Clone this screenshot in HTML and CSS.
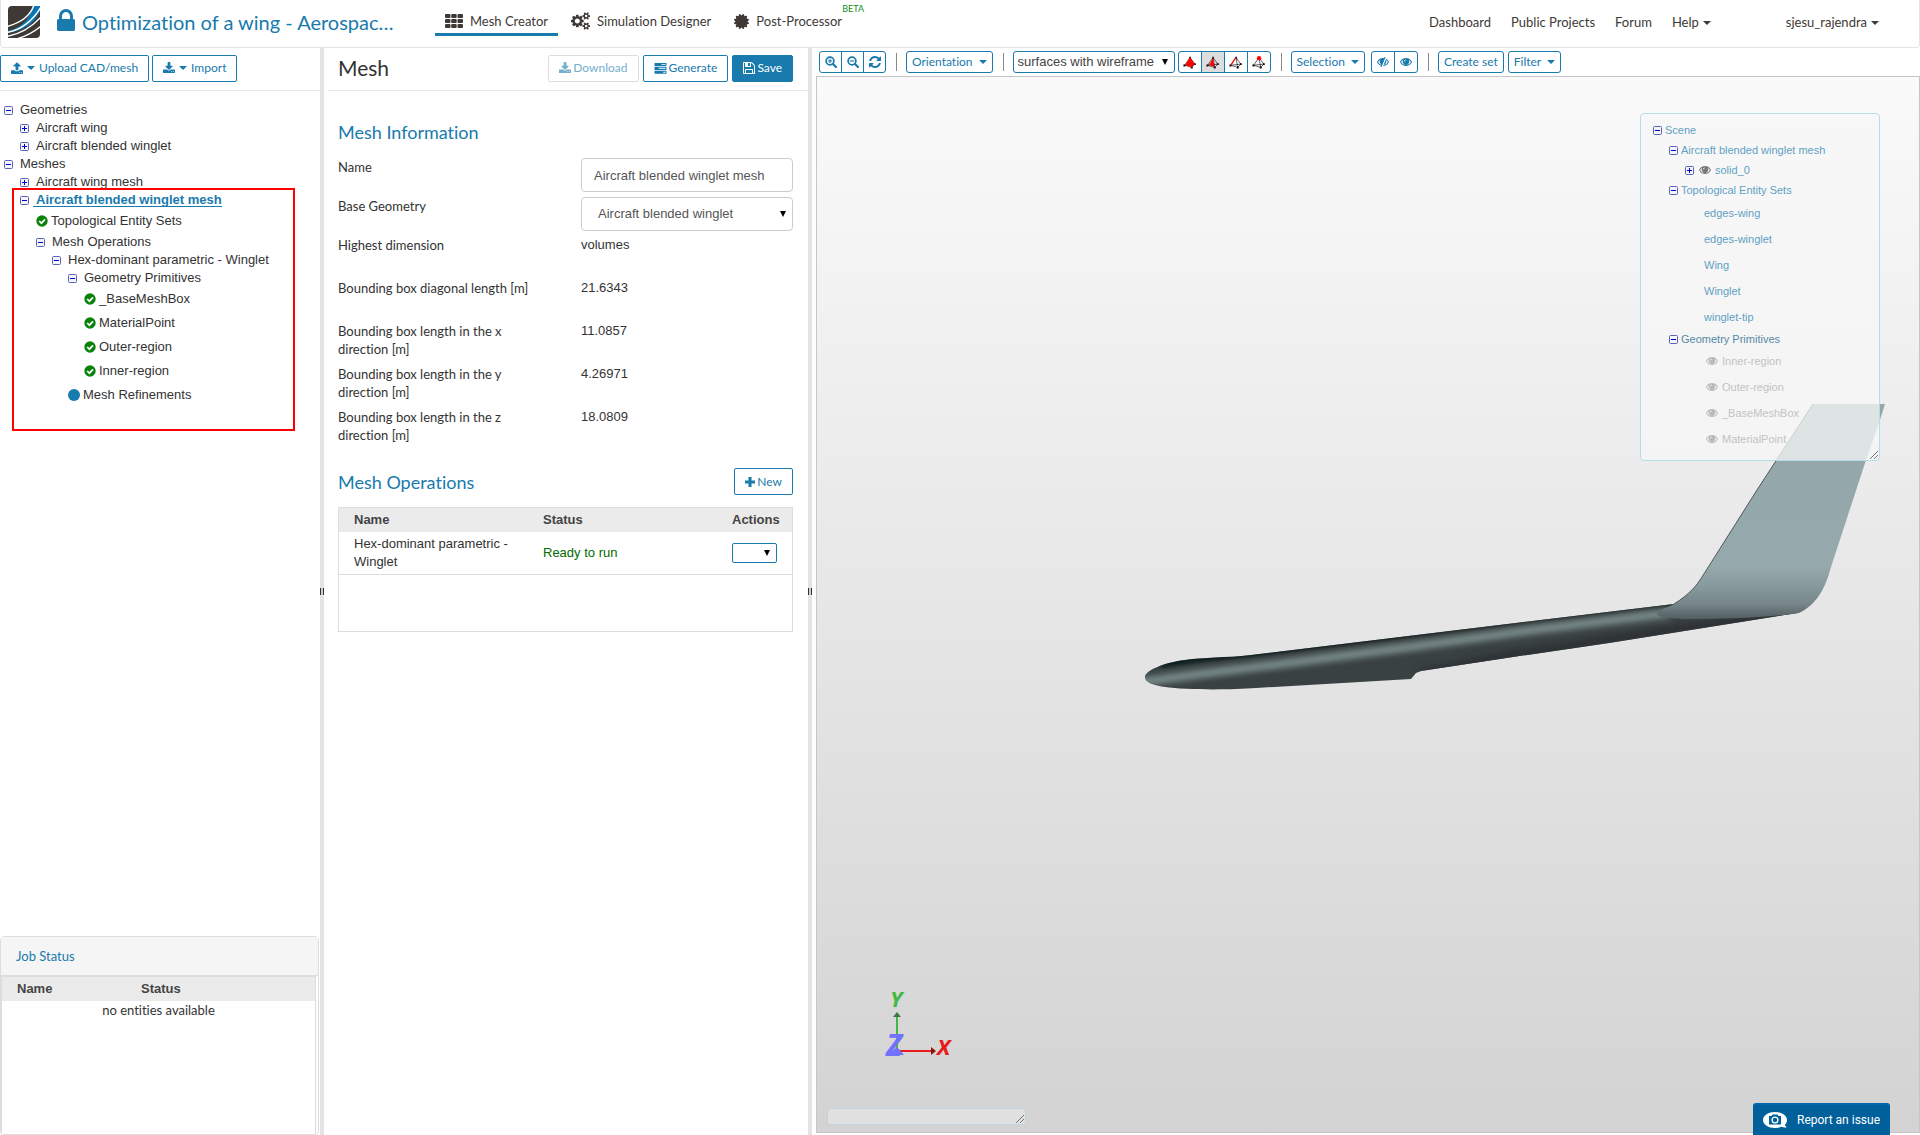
FILE: index.html
```html
<!DOCTYPE html>
<html lang="en">
<head>
<meta charset="utf-8">
<title>Mesh Creator</title>
<link rel="stylesheet" href="styles.css">
</head>
<body>
<svg class="sprite" aria-hidden="true">
  <symbol id="lock" viewBox="320 128 1152 1408"><path d="M640 768h512v-192q0-106-75-181t-181-75-181 75-75 181v192zm832 96v576q0 40-28 68t-68 28h-960q-40 0-68-28t-28-68v-576q0-40 28-68t68-28h32v-192q0-184 132-316t316-132 316 132 132 316v192h32q40 0 68 28t28 68z"/></symbol>
  <symbol id="download" viewBox="64 0 1664 1664"><path d="M1344 1344q0-26-19-45t-45-19-45 19-19 45 19 45 45 19 45-19 19-45zm256 0q0-26-19-45t-45-19-45 19-19 45 19 45 45 19 45-19 19-45zm128-224v320q0 40-28 68t-68 28h-1472q-40 0-68-28t-28-68v-320q0-40 28-68t68-28h465l135 136q58 56 136 56t136-56l136-136h464q40 0 68 28t28 68zm-325-569q17 41-14 70l-448 448q-18 19-45 19t-45-19l-448-448q-31-29-14-70 17-39 59-39h256v-448q0-26 19-45t45-19h256q26 0 45 19t19 45v448h256q42 0 59 39z"/></symbol>
  <symbol id="upload" viewBox="64 0 1664 1664"><path d="M1344 1472q0-26-19-45t-45-19-45 19-19 45 19 45 45 19 45-19 19-45zm256 0q0-26-19-45t-45-19-45 19-19 45 19 45 45 19 45-19 19-45zm128-224v320q0 40-28 68t-68 28h-1472q-40 0-68-28t-28-68v-320q0-40 28-68t68-28h427q21 56 70.5 92t110.5 36h256q61 0 110.5-36t70.5-92h427q40 0 68 28t28 68zm-325-648q-17 40-59 40h-256v448q0 26-19 45t-45 19h-256q-26 0-45-19t-19-45v-448h-256q-42 0-59-40-17-39 14-69l448-448q18-19 45-19t45 19l448 448q31 30 14 69z"/></symbol>
  <symbol id="cogs" viewBox="0 0 1920 1792"><path d="M896 896q0-106-75-181t-181-75-181 75-75 181 75 181 181 75 181-75 75-181zm768 512q0-52-38-90t-90-38-90 38-38 90q0 53 37.5 90.5t90.5 37.5 90.5-37.5 37.5-90.5zm0-1024q0-52-38-90t-90-38-90 38-38 90q0 53 37.5 90.5t90.5 37.5 90.5-37.5 37.5-90.5zm-384 421v185q0 10-7 19.5t-16 10.5l-155 24q-11 35-32 76 34 48 90 115 7 11 7 20 0 12-7 19-23 30-82.5 89.5t-78.5 59.5q-11 0-21-7l-115-90q-37 19-77 31-11 108-23 155-7 24-30 24h-186q-11 0-20-7.5t-10-17.5l-23-153q-34-10-75-31l-118 89q-7 7-20 7-11 0-21-8-144-133-144-160 0-9 7-19 10-14 41-53t47-61q-23-44-35-82l-152-24q-10-1-17-9.5t-7-19.5v-185q0-10 7-19.5t16-10.5l155-24q11-35 32-76-34-48-90-115-7-11-7-20 0-12 7-20 22-30 82-89t79-59q11 0 21 7l115 90q34-18 77-32 11-108 23-154 7-24 30-24h186q11 0 20 7.5t10 17.5l23 153q34 10 75 31l118-89q8-7 20-7 11 0 21 8 144 133 144 160 0 8-7 19-12 16-42 54t-45 60q23 48 34 82l152 23q10 2 17 10.5t7 19.5zm640 533v140q0 16-149 31-12 27-30 52 51 113 51 138 0 4-4 7-122 71-124 71-8 0-46-47t-52-68q-20 2-30 2t-30-2q-14 21-52 68t-46 47q-2 0-124-71-4-3-4-7 0-25 51-138-18-25-30-52-149-15-149-31v-140q0-16 149-31 13-29 30-52-51-113-51-138 0-4 4-7 4-2 35-20t59-34 30-16q8 0 46 46.5t52 67.5q20-2 30-2t30 2q51-71 92-112l6-2q4 0 124 70 4 3 4 7 0 25-51 138 17 23 30 52 149 15 149 31zm0-1024v140q0 16-149 31-12 27-30 52 51 113 51 138 0 4-4 7-122 71-124 71-8 0-46-47t-52-68q-20 2-30 2t-30-2q-14 21-52 68t-46 47q-2 0-124-71-4-3-4-7 0-25 51-138-18-25-30-52-149-15-149-31v-140q0-16 149-31 13-29 30-52-51-113-51-138 0-4 4-7 4-2 35-20t59-34 30-16q8 0 46 46.5t52 67.5q20-2 30-2t30 2q51-71 92-112l6-2q4 0 124 70 4 3 4 7 0 25-51 138 17 23 30 52 149 15 149 31z"/></symbol>
  <symbol id="burst" viewBox="128 128 1536 1536"><path d="M1504 896l138 135q30 28 20 70-12 41-52 51l-188 48 53 186q12 41-19 70-29 31-70 19l-186-53-48 188q-10 40-51 52-12 2-19 2-31 0-51-22l-135-138-135 138q-28 30-70 20-41-11-51-52l-48-188-186 53q-41 12-70-19-31-29-19-70l53-186-188-48q-40-10-52-51-10-42 20-70l138-135-138-135q-30-28-20-70 12-41 52-51l188-48-53-186q-12-41 19-70 29-31 70-19l186 53 48-188q10-41 51-51 41-12 70 19l135 139 135-139q29-30 70-19 41 10 51 51l48 188 186-53q41-12 70 19 31 29 19 70l-53 186 188 48q40 10 52 51 10 42-20 70z"/></symbol>
  <symbol id="floppy" viewBox="128 128 1536 1536"><path d="M512 1536h768v-384h-768v384zm896 0h128v-896q0-14-10-38.5t-20-34.5l-281-281q-10-10-34-20t-39-10v416q0 40-28 68t-68 28h-576q-40 0-68-28t-28-68v-416h-128v1280h128v-416q0-40 28-68t68-28h832q40 0 68 28t28 68v416zm-384-928v-320q0-13-9.5-22.5t-22.5-9.5h-192q-13 0-22.5 9.5t-9.5 22.5v320q0 13 9.5 22.5t22.5 9.5h192q13 0 22.5-9.5t9.5-22.5zm640 32v928q0 40-28 68t-68 28h-1344q-40 0-68-28t-28-68v-1344q0-40 28-68t68-28h928q40 0 88 20t76 48l280 280q28 28 48 76t20 88z"/></symbol>
  <symbol id="refresh" viewBox="128 128 1536 1536"><path d="M1639 1056q0 5-1 7-64 268-268 434.5t-478 166.5q-146 0-282.5-55t-243.5-157l-129 129q-19 19-45 19t-45-19-19-45v-448q0-26 19-45t45-19h448q26 0 45 19t19 45-19 45l-137 137q71 66 161 102t187 36q134 0 250-65t186-179q11-17 53-117 8-23 30-23h192q13 0 22.5 9.5t9.5 22.5zm25-800v448q0 26-19 45t-45 19h-448q-26 0-45-19t-19-45 19-45l138-138q-148-137-349-137-134 0-250 65t-186 179q-11 17-53 117-8 23-30 23h-199q-13 0-22.5-9.5t-9.5-22.5v-7q65-268 270-434.5t480-166.5q146 0 284 55.5t245 156.5l130-129q19-19 45-19t45 19 19 45z"/></symbol>
  <symbol id="grid" viewBox="0 0 18 14"><path d="M1 0h3.500a1 1 0 0 1 1 1v2a1 1 0 0 1-1 1H1a1 1 0 0 1-1-1V1a1 1 0 0 1 1-1zm6.200 0h3.500a1 1 0 0 1 1 1v2a1 1 0 0 1-1 1H7.200a1 1 0 0 1-1-1V1a1 1 0 0 1 1-1zm6.300 0H17a1 1 0 0 1 1 1v2a1 1 0 0 1-1 1h-3.500a1 1 0 0 1-1-1V1a1 1 0 0 1 1-1zM1 5h3.500a1 1 0 0 1 1 1v2a1 1 0 0 1-1 1H1a1 1 0 0 1-1-1V6a1 1 0 0 1 1-1zm6.200 0h3.500a1 1 0 0 1 1 1v2a1 1 0 0 1-1 1H7.200a1 1 0 0 1-1-1V6a1 1 0 0 1 1-1zm6.300 0H17a1 1 0 0 1 1 1v2a1 1 0 0 1-1 1h-3.500a1 1 0 0 1-1-1V6a1 1 0 0 1 1-1zM1 10h3.500a1 1 0 0 1 1 1v2a1 1 0 0 1-1 1H1a1 1 0 0 1-1-1v-2a1 1 0 0 1 1-1zm6.200 0h3.500a1 1 0 0 1 1 1v2a1 1 0 0 1-1 1H7.200a1 1 0 0 1-1-1v-2a1 1 0 0 1 1-1zm6.300 0H17a1 1 0 0 1 1 1v2a1 1 0 0 1-1 1h-3.500a1 1 0 0 1-1-1v-2a1 1 0 0 1 1-1z"/></symbol>
  <symbol id="tasks" viewBox="0 0 14 12"><path fill-rule="evenodd" d="M.5 0h13v3.300H.5zM8 1v1h4.500V1zM.5 4.200h13v3.300H.5zM5 5.300v1h7.500v-1zM.5 8.500h13v3.300H.5zM10 9.600v1h2.500v-1z"/></symbol>
  <symbol id="plus" viewBox="0 0 10 10"><path d="M3.500 0h3v3.500H10v3H6.500V10h-3V6.500H0v-3h3.500z"/></symbol>
  <symbol id="zoom-in" viewBox="0 0 12 12"><g fill="none" stroke="currentColor"><circle cx="5" cy="5" r="3.900" stroke-width="1.700"/><path d="M8 8l3 3" stroke-width="2.200" stroke-linecap="round"/><path d="M2.800 5h4.400M5 2.800v4.400" stroke-width="1.100"/></g></symbol>
  <symbol id="zoom-out" viewBox="0 0 12 12"><g fill="none" stroke="currentColor"><circle cx="5" cy="5" r="3.900" stroke-width="1.700"/><path d="M8 8l3 3" stroke-width="2.200" stroke-linecap="round"/><path d="M2.800 5h4.400" stroke-width="1.200"/></g></symbol>
  <symbol id="check" viewBox="0 0 12 12"><circle cx="6" cy="6" r="5.700"/><path d="M3.200 6l2.200 2.200 3.600-3.800" fill="none" stroke="#fff" stroke-width="1.700"/></symbol>
  <symbol id="dot" viewBox="0 0 12 12"><circle cx="6" cy="6" r="6"/></symbol>
  <symbol id="eye" viewBox="0 0 12 8"><path fill-rule="evenodd" d="M6 0c2.600 0 4.800 1.500 6 4-1.200 2.500-3.400 4-6 4S1.200 6.500 0 4C1.200 1.500 3.400 0 6 0zM1.100 4C2 5.700 3.800 7 6 7s4-1.300 4.900-3C10.400 3 9.600 2.200 8.600 1.700A3.200 3.200 0 1 1 3.400 1.700C2.400 2.200 1.600 3 1.100 4zM6 1.500a2 2 0 0 0-2 2h.7A1.300 1.300 0 0 1 6 2.200z"/></symbol>
  <symbol id="eye-off" viewBox="0 0 12 10"><path fill-rule="evenodd" d="M6 1c2.600 0 4.800 1.500 6 4-1.200 2.500-3.400 4-6 4S1.200 7.500 0 5C1.200 2.500 3.400 1 6 1zM1.100 5C2 6.700 3.800 8 6 8s4-1.300 4.900-3C10.400 4 9.600 3.200 8.600 2.700A3.200 3.200 0 1 1 3.400 2.700C2.400 3.200 1.600 4 1.100 5z"/><path d="M9 0L5 10" stroke="#fff" stroke-width="1.500"/><path d="M8 0L4 10" stroke="currentColor"/></symbol>
  <symbol id="minus-box" viewBox="0 0 9 9"><rect x=".5" y=".5" width="8" height="8" rx="1" fill="#f4f4fa" stroke="#5a64b4"/><path d="M2 4.500h5" stroke="#00c"/></symbol>
  <symbol id="plus-box" viewBox="0 0 9 9"><rect x=".5" y=".5" width="8" height="8" rx="1" fill="#f4f4fa" stroke="#5a64b4"/><path d="M2 4.500h5M4.500 2v5" stroke="#00c"/></symbol>
  <symbol id="tetra" viewBox="0 0 12 12"><path d="M6.500 1.500L1.500 8.500l6.500 2 3-3zM6.500 1.500L8 10.500M1.500 8.500L11 7.500" fill="none" stroke="#111" stroke-width=".6"/><path d="M5.800 0.800h1.500v1.500h-1.500zM.4 7.800h1.800v1.800h-1.800zM7.200 9.700h1.800v1.800h-1.800zM10 6.600h1.800v1.800h-1.800z" fill="#111"/></symbol>
</svg>

<header class="header">
  <div class="brand">
    <svg class="logo" viewBox="0 0 32 32" role="img" aria-label="Logo"><defs><clipPath id="logo-clip"><path d="M4 0h28v28a4 4 0 0 1-4 4H0V4a4 4 0 0 1 4-4z"/></clipPath></defs><g clip-path="url(#logo-clip)"><rect width="32" height="32" fill="#3e3935"/><path d="M-1 25C12 22 20 17 25 -1H33V3C28 15 20 24-1 27z" fill="#0b76b5"/><g fill="none" stroke="#fff" stroke-width="1.400"><path d="M-1 20.500C12 17 22 11 26-1"/><path d="M-1 26.500C12 24 24 16 33 1"/><path d="M-1 30.500C12 28 24 21 33 11"/><path d="M10 32.500C18 30 26 26 33 20"/></g></g></svg>
    <svg class="icon icon--lock"><use href="#lock"/></svg>
    <h1 class="project">Optimization of a wing - Aerospac…</h1>
  </div>
  <nav class="modes">
    <a class="mode mode--active" href="#mesh"><svg class="icon icon--grid"><use href="#grid"/></svg>Mesh Creator</a>
    <a class="mode" href="#sim"><svg class="icon icon--cogs"><use href="#cogs"/></svg>Simulation Designer</a>
    <a class="mode" href="#post"><svg class="icon icon--burst"><use href="#burst"/></svg>Post-Processor<span class="beta">BETA</span></a>
  </nav>
  <nav class="links">
    <a href="#dashboard">Dashboard</a>
    <a href="#projects">Public Projects</a>
    <a href="#forum">Forum</a>
    <a href="#help">Help<span class="caret"></span></a>
    <a class="user" href="#user">sjesu_rajendra<span class="caret"></span></a>
  </nav>
</header>

<main class="workspace">
  <aside class="sidebar">
    <div class="bar bar--sidebar">
      <button class="btn btn--menu" type="button"><svg class="icon"><use href="#upload"/></svg><span class="caret"></span>Upload CAD/mesh</button>
      <button class="btn btn--menu" type="button"><svg class="icon"><use href="#download"/></svg><span class="caret"></span>Import</button>
    </div>
    <div class="tree-wrap">
      <ul class="tree">
        <li><div class="node"><svg class="toggle"><use href="#minus-box"/></svg>Geometries</div>
          <ul>
            <li><div class="node"><svg class="toggle"><use href="#plus-box"/></svg>Aircraft wing</div></li>
            <li><div class="node"><svg class="toggle"><use href="#plus-box"/></svg>Aircraft blended winglet</div></li>
          </ul></li>
        <li><div class="node"><svg class="toggle"><use href="#minus-box"/></svg>Meshes</div>
          <ul>
            <li><div class="node"><svg class="toggle"><use href="#plus-box"/></svg>Aircraft wing mesh</div></li>
            <li><div class="node"><svg class="toggle"><use href="#minus-box"/></svg><a class="selected" href="#m2">Aircraft blended winglet mesh</a></div>
              <ul>
                <li><div class="node node--leaf"><svg class="state"><use href="#check"/></svg>Topological Entity Sets</div></li>
                <li><div class="node"><svg class="toggle"><use href="#minus-box"/></svg>Mesh Operations</div>
                  <ul>
                    <li><div class="node"><svg class="toggle"><use href="#minus-box"/></svg>Hex-dominant parametric - Winglet</div>
                      <ul>
                        <li><div class="node"><svg class="toggle"><use href="#minus-box"/></svg>Geometry Primitives</div>
                          <ul>
                            <li><div class="node node--leaf"><svg class="state"><use href="#check"/></svg>_BaseMeshBox</div></li>
                            <li><div class="node node--leaf"><svg class="state"><use href="#check"/></svg>MaterialPoint</div></li>
                            <li><div class="node node--leaf"><svg class="state"><use href="#check"/></svg>Outer-region</div></li>
                            <li><div class="node node--leaf"><svg class="state"><use href="#check"/></svg>Inner-region</div></li>
                          </ul></li>
                        <li><div class="node node--leaf"><svg class="state state--open"><use href="#dot"/></svg>Mesh Refinements</div></li>
                      </ul></li>
                  </ul></li>
              </ul></li>
          </ul></li>
      </ul>
      <div class="highlight"></div>
    </div>
    <section class="jobs">
      <h2 class="jobs-title">Job Status</h2>
      <div class="jobs-body">
        <table class="table table--jobs">
          <thead><tr><th>Name</th><th>Status</th></tr></thead>
          <tbody><tr><td class="empty" colspan="2">no entities available</td></tr></tbody>
        </table>
      </div>
    </section>
  </aside>
  <div class="splitter"></div>

  <section class="panel">
    <div class="bar bar--panel">
      <h2 class="panel-title">Mesh</h2>
      <button class="btn" type="button" disabled><svg class="icon"><use href="#download"/></svg>Download</button>
      <button class="btn" type="button"><svg class="icon icon--tasks"><use href="#tasks"/></svg>Generate</button>
      <button class="btn btn--primary" type="button"><svg class="icon"><use href="#floppy"/></svg>Save</button>
    </div>
    <div class="panel-body">
      <h3 class="section-title">Mesh Information</h3>
      <div class="form">
        <div class="field"><label for="name">Name</label><input class="control" id="name" type="text" value="Aircraft blended winglet mesh"></div>
        <div class="field"><label for="geometry">Base Geometry</label><span class="pick"><select class="control control--select" id="geometry"><option>Aircraft blended winglet</option></select></span></div>
        <div class="field field--text"><span>Highest dimension</span><span class="value">volumes</span></div>
        <div class="field field--text"><span>Bounding box diagonal length [m]</span><span class="value">21.6343</span></div>
        <div class="field field--text"><span>Bounding box length in the x direction [m]</span><span class="value">11.0857</span></div>
        <div class="field field--text"><span>Bounding box length in the y direction [m]</span><span class="value">4.26971</span></div>
        <div class="field field--text"><span>Bounding box length in the z direction [m]</span><span class="value">18.0809</span></div>
      </div>
      <div class="section-head">
        <h3 class="section-title">Mesh Operations</h3>
        <button class="btn" type="button"><svg class="icon icon--plus"><use href="#plus"/></svg>New</button>
      </div>
      <div class="table-box">
        <table class="table table--ops">
          <thead><tr><th>Name</th><th>Status</th><th>Actions</th></tr></thead>
          <tbody><tr><td>Hex-dominant parametric - Winglet</td><td class="ready">Ready to run</td><td><span class="pick pick--small"><select class="mini" aria-label="Actions"><option></option></select></span></td></tr></tbody>
        </table>
      </div>
    </div>
  </section>
  <div class="splitter"></div>

  <section class="viewer">
    <div class="toolbar">
      <div class="group">
        <button class="tool tool--zoom" type="button" aria-label="Zoom in"><svg class="icon"><use href="#zoom-in"/></svg></button>
        <button class="tool tool--zoom" type="button" aria-label="Zoom out"><svg class="icon"><use href="#zoom-out"/></svg></button>
        <button class="tool tool--zoom" type="button" aria-label="Reset view"><svg class="icon"><use href="#refresh"/></svg></button>
      </div>
      <span class="sep"></span>
      <button class="tool tool--text" type="button">Orientation<span class="caret"></span></button>
      <span class="sep"></span>
      <span class="pick pick--render"><select class="render" aria-label="Render mode"><option>surfaces with wireframe</option></select></span>
      <div class="group">
        <button class="tool tool--tetra" type="button" aria-label="Volumes"><svg class="tetra" viewBox="0 0 12 12"><use href="#tetra"/><path d="M6.500 1L2 8.500l6 1.800 2.800-2.900z" fill="#f00"/></svg></button>
        <button class="tool tool--tetra tool--on" type="button" aria-label="Faces"><svg class="tetra" viewBox="0 0 12 12"><use href="#tetra"/><path d="M6.500 1.500L3 8.300l4.800 1.900z" fill="#f00"/></svg></button>
        <button class="tool tool--tetra" type="button" aria-label="Edges"><svg class="tetra" viewBox="0 0 12 12"><use href="#tetra"/><path d="M6 2L2 8" stroke="#f00"/></svg></button>
        <button class="tool tool--tetra" type="button" aria-label="Vertices"><svg class="tetra" viewBox="0 0 12 12"><use href="#tetra"/><circle cx="6.500" cy="2" r="2" fill="#f00"/></svg></button>
      </div>
      <span class="sep"></span>
      <button class="tool tool--text" type="button">Selection<span class="caret"></span></button>
      <div class="group group--eyes">
        <button class="tool tool--eye" type="button" aria-label="Hide"><svg class="icon icon--eye-off"><use href="#eye-off"/></svg></button>
        <button class="tool tool--eye" type="button" aria-label="Show"><svg class="icon icon--eye"><use href="#eye"/></svg></button>
      </div>
      <span class="sep"></span>
      <button class="tool tool--text" type="button">Create set</button>
      <button class="tool tool--text" type="button">Filter<span class="caret"></span></button>
    </div>
    <div class="canvas">
      <svg class="drawing" viewBox="817 77 1102 1055" preserveAspectRatio="xMidYMid slice" role="img" aria-label="Wing model">
        <defs>
          <clipPath id="wing"><path d="M1674 604L1251 655C1225 658 1205 657 1185 660C1162 663 1145 671 1145 677C1145 682 1152 685 1165 687C1185 690 1230 690 1256 688L1411 679L1416 673L1421 671L1513 657L1609 643L1797 613L1740 600z"/></clipPath>
          <linearGradient id="fin" gradientUnits="userSpaceOnUse" x1="0" y1="404" x2="0" y2="619"><stop offset="0" stop-color="#93a7aa"/><stop offset=".75" stop-color="#96a9ac"/><stop offset=".84" stop-color="#8a9b9f"/><stop offset=".93" stop-color="#76868a"/><stop offset="1" stop-color="#525e60"/></linearGradient>
          <filter id="soft" filterUnits="userSpaceOnUse" x="1100" y="550" width="750" height="180"><feGaussianBlur stdDeviation="3"/></filter>
        </defs>
        <g clip-path="url(#wing)">
          <rect x="1140" y="590" width="670" height="105" fill="#394142"/>
          <g fill="none" filter="url(#soft)">
            <path d="M1135 683L1200 674L1280 664L1402 648L1533 630L1670 613" stroke="#7e908f" stroke-width="8"/>
            <path d="M1160 664L1200 658L1251 653L1690 601" stroke="#060909" stroke-width="7"/>
            <path d="M1420 674L1513 655L1609 640L1797 612" stroke="#2e3336" stroke-width="10"/>
          </g>
        </g>
        <path d="M1813 404H1885L1879 423L1866 460L1831 567C1826 586 1818 604 1799 613C1765 618 1725 619 1690 619C1672 619 1657 617 1657 614C1659 609 1668 608 1674 604C1690 594 1697 585 1702 577L1757 490z" fill="url(#fin)"/>
        <path d="M1813 404L1757 490L1702 577C1697 585 1690 594 1674 604" fill="none" stroke="#4d5759"/>
        <g class="axes">
          <path d="M897 1051V1016" stroke="#41b941" stroke-width="2"/><path d="M893 1017l4-5 4 5z" fill="#3c7a3c"/>
          <path d="M897 1051H931" stroke="#e81a1a" stroke-width="2"/><path d="M931 1047l5 4-5 4z" fill="#8c1212"/>
          <text x="890" y="1007" fill="#41b941">Y</text>
          <text x="937" y="1055" fill="#e81a1a">X</text>
          <text class="axis-z" x="886" y="1056" fill="#7171fb">Z</text>
          <path d="M888 1055l9-8 7 8z" fill="#7171fb"/>
        </g>
      </svg>
      <div class="scene">
        <ul class="tree tree--scene">
          <li><div class="node"><svg class="toggle"><use href="#minus-box"/></svg>Scene</div>
            <ul>
              <li><div class="node"><svg class="toggle"><use href="#minus-box"/></svg>Aircraft blended winglet mesh</div>
                <ul><li><div class="node"><svg class="toggle"><use href="#plus-box"/></svg><svg class="eye eye--on"><use href="#eye"/></svg>solid_0</div></li></ul></li>
              <li><div class="node"><svg class="toggle"><use href="#minus-box"/></svg>Topological Entity Sets</div>
                <ul>
                  <li><div class="node node--leaf">edges-wing</div></li>
                  <li><div class="node node--leaf">edges-winglet</div></li>
                  <li><div class="node node--leaf">Wing</div></li>
                  <li><div class="node node--leaf">Winglet</div></li>
                  <li><div class="node node--leaf">winglet-tip</div></li>
                </ul></li>
              <li><div class="node node--group"><svg class="toggle"><use href="#minus-box"/></svg>Geometry Primitives</div>
                <ul>
                  <li><div class="node node--leaf node--off"><svg class="eye"><use href="#eye"/></svg>Inner-region</div></li>
                  <li><div class="node node--leaf node--off"><svg class="eye"><use href="#eye"/></svg>Outer-region</div></li>
                  <li><div class="node node--leaf node--off"><svg class="eye"><use href="#eye"/></svg>_BaseMeshBox</div></li>
                  <li><div class="node node--leaf node--off"><svg class="eye"><use href="#eye"/></svg>MaterialPoint</div></li>
                </ul></li>
            </ul></li>
        </ul>
        <svg class="grip" viewBox="0 0 8 8"><path d="M0 8L8 0M4 8L8 4"/></svg>
      </div>
      <div class="console"><svg class="grip" viewBox="0 0 8 8"><path d="M0 8L8 0M4 8L8 4"/></svg></div>
    </div>
  </section>
</main>
<button class="report" type="button"><svg class="report-icon" viewBox="0 0 24 16"><path d="M12 0c6.600 0 12 3.400 12 8 0 2-.8 3.700-2.300 5l2 2.500c-2 .3-4-.1-5.200-.7-2 .8-4.200 1.200-6.500 1.200C5.400 16 0 12.600 0 8s5.400-8 12-8z" fill="#fff"/><path d="M6 4h2.500l1-1.500h5l1 1.500H18v8.500H6z" fill="#00609c"/><circle cx="12" cy="8" r="2.900" fill="none" stroke="#fff" stroke-width="1.300"/></svg>Report an issue</button>
</body>
</html>
```
FILE: styles.css
```css
* { box-sizing: border-box; }
body {
  margin: 0;
  height: 100vh;
  display: flex;
  flex-direction: column;
  overflow: hidden;
  background: #fff;
  color: #333;
  font: 13px/18px Lato, sans-serif;
}
body, button, td { font-variant-ligatures: none; }
h1, h2, h3 { margin: 0; font-weight: 400; }
ul { margin: 0; padding: 0; list-style: none; }
a { color: inherit; text-decoration: none; }
button, input, select { font: inherit; margin: 0; }
.sprite { display: none; }
.icon { width: 12px; height: 12px; fill: currentColor; flex: none; }
.caret {
  flex: none;
  display: inline-block;
  border: 4px solid transparent;
  border-top-color: currentColor;
  border-bottom: 0;
}

.header {
  flex: none;
  display: flex;
  height: 48px;
  border: 1px solid #e4e4e4;
  border-top: 0;
  border-radius: 0 0 4px 4px;
  color: #3e3935;
}
.brand { width: 434px; display: flex; align-items: flex-start; padding: 6px 0 0 7px; color: #187aad; }
.logo { width: 32px; height: 32px; }
.icon--lock { width: 18px; height: 22px; margin: 3px 7px 0 17px; }
.project { font-size: 20px; line-height: 32px; white-space: nowrap; }
.modes { display: flex; gap: 3px; }
.mode {
  position: relative;
  display: flex;
  align-items: center;
  height: 36px;
  padding: 9px 10px 0;
  border-bottom: 3px solid transparent;
  gap: 7px;
  white-space: nowrap;
}
.mode--active { border-color: #187aad; }
.icon--grid { width: 18px; height: 14px; }
.icon--cogs { width: 19px; height: 18px; }
.icon--burst { width: 15px; height: 15px; }
.beta { position: absolute; top: 3px; right: -12px; font-size: 9px; line-height: 12px; color: #128a20; }
.links { display: flex; margin-left: auto; padding: 13px 40px 0 0; gap: 20px; }
.links a { white-space: nowrap; }
.links .caret { margin: 0 0 2px 4px; }
.user { margin-left: 55px; }

.workspace { flex: 1; display: flex; min-height: 0; }
.sidebar { width: 320px; flex: none; display: flex; flex-direction: column; }
.splitter {
  width: 4px;
  flex: none;
  background: linear-gradient(90deg, #333 1px, #ccc 1px 3px, #333 3px) center / 4px 7px no-repeat #e4e4e4;
}
.bar { flex: none; display: flex; align-items: center; height: 43px; padding-bottom: 2px; border-bottom: 1px solid #e8e8e8; }
.bar--sidebar { gap: 3px; }
.bar--panel { margin-left: 4px; padding: 0 15px 2px 10px; gap: 4px; }
.btn {
  display: inline-flex;
  align-items: center;
  justify-content: center;
  gap: 2px;
  height: 27px;
  padding: 0 10px;
  border: 1px solid #187aad;
  border-radius: 2px;
  background: #fff;
  color: #187aad;
  font-size: 12px;
  white-space: nowrap;
}
.btn--menu { gap: 4px; }
.btn--primary { background: #187aad; color: #fff; }
.btn:disabled { color: #74afce; border-color: #ddd; }
.icon--tasks { width: 13px; height: 11px; }
.icon--plus { width: 10px; height: 10px; }

.tree-wrap { position: relative; flex: 1; padding: 10px 0 0 4px; }
.tree { font: 13px/18px "Liberation Sans", sans-serif; }
.tree ul { padding-left: 16px; }
.node { display: flex; align-items: center; height: 18px; white-space: nowrap; }
.node--leaf { height: 24px; }
.toggle { width: 9px; height: 9px; margin-right: 7px; flex: none; }
.state { width: 12px; height: 12px; margin-right: 3px; fill: #0a820a; flex: none; }
.state--open { fill: #187aad; }
.selected { margin-left: -3px; padding-left: 3px; color: #187aad; font-weight: 700; line-height: 13px; border-bottom: 1px solid; }
.highlight { position: absolute; left: 12px; top: 97px; width: 283px; height: 243px; border: 2px solid #f00; }

.jobs { height: 199px; flex: none; margin-right: 1px; border: 1px solid #ddd; border-radius: 4px; display: flex; flex-direction: column; }
.jobs-title { height: 39px; padding: 10px 15px; border-bottom: 1px solid #ddd; background: #f5f5f5; font-size: 13px; line-height: 18px; color: #187aad; }
.jobs-body { flex: 1; margin-right: 2px; border: 1px solid #ddd; border-bottom: 0; }
.table { width: 100%; border-collapse: collapse; table-layout: fixed; font: 13px/18px "Liberation Sans", sans-serif; }
.table th { height: 24px; padding: 0 15px; background: #ebebeb; color: #444; text-align: left; font-weight: 700; }
.table--jobs th:first-child { width: 124px; }
.table .empty { padding: 0; text-align: center; font-family: Lato, sans-serif; }

.panel { width: 484px; flex: none; }
.panel-title { margin-right: auto; font-size: 21px; line-height: 28px; }
.panel-body { padding: 29px 15px 0 14px; }
.section-title { font-size: 18px; line-height: 24px; color: #187aad; }
.form { padding-top: 14px; }
.field { display: grid; grid-template-columns: 195px 1fr; column-gap: 48px; height: 39px; }
.field--text { height: 43px; }
.value { font: 13px/18px "Liberation Sans", sans-serif; }
.field .control {
  width: 100%;
  height: 34px;
  padding: 0 12px;
  border: 1px solid #ccc;
  border-radius: 4px;
  background: #fff;
  color: #555;
  font: 13px/18px "Liberation Sans", sans-serif;
}
.field .control--select { padding: 0 16px; }
select { appearance: none; }
.pick { position: relative; display: block; }
.pick::after {
  content: "";
  position: absolute;
  right: 7px;
  top: 14px;
  border: 3px solid transparent;
  border-top: 6px solid #000;
  border-bottom: 0;
  pointer-events: none;
}
.section-head { display: flex; align-items: center; justify-content: space-between; padding-top: 17px; }
.table-box { margin-top: 12px; height: 125px; border: 1px solid #ddd; }
.table--ops td { height: 42px; padding: 0 15px; border-bottom: 1px solid #ddd; }
.table--ops th:nth-child(1) { width: 189px; }
.table--ops th:nth-child(2) { width: 189px; }
.table--ops th:nth-child(3) { padding-right: 0; }
.table--ops .ready { color: #006b00; }
.pick--small { width: 45px; }
.pick--small::after { top: 7px; }
.mini { display: block; width: 45px; height: 20px; border: 1px solid #187aad; border-radius: 2px; background: #fff; }

.viewer { flex: 1; min-width: 0; display: flex; flex-direction: column; }
.toolbar { flex: none; display: flex; align-items: center; height: 28px; padding-left: 7px; color: #187aad; }
.group { display: flex; }
.tool {
  display: flex;
  align-items: center;
  justify-content: center;
  height: 22px;
  padding: 0;
  border: 1px solid #187aad;
  border-radius: 3px;
  background: #fff;
  color: #187aad;
  font-size: 12px;
  white-space: nowrap;
}
.group .tool + .tool { margin-left: -1px; border-top-left-radius: 0; border-bottom-left-radius: 0; }
.group .tool:not(:last-child) { border-top-right-radius: 0; border-bottom-right-radius: 0; }
.tool--zoom { width: 23px; }
.tool--tetra { width: 24px; }
.tool--eye { width: 24px; }
.tool--on { background: #ddd; }
.tool--text { padding: 0 5px; gap: 6px; margin-right: 4px; }
.tetra { width: 13px; height: 13px; }
.icon--eye { height: 8px; }
.icon--eye-off { height: 10px; }
.group--eyes { margin-left: 2px; }
.sep { width: 1px; height: 18px; margin: 0 9px 0 10px; background: #8f8780; }
.tool + .sep { margin-left: 6px; }
.pick--render { margin-right: 3px; }
.pick--render::after { top: 8px; }
.render { display: block; width: 162px; height: 22px; padding: 0 4px; border: 1px solid #187aad; border-radius: 3px; background: #fff; color: #444; font: 13px/18px "Liberation Sans", sans-serif; }

.canvas { position: relative; flex: 1; min-height: 0; margin: 0 0 2px 4px; border: 1px solid #c6c6c6; background: linear-gradient(#fafafa, #d3d3d3); }
.drawing { display: block; width: 100%; height: 100%; }
.axes { font: italic 700 22px "Open Sans", sans-serif; }
.axes .axis-z { font-size: 30px; }
.scene {
  position: absolute;
  top: 36px;
  right: 39px;
  width: 240px;
  height: 348px;
  padding: 6px 12px;
  border: 1px solid #b4dde9;
  border-radius: 4px;
  background: rgba(247, 247, 247, .75);
}
.tree--scene { font-size: 11px; color: #5fa1c3; }
.tree--scene .node { height: 20px; }
.tree--scene .node--leaf { height: 26px; padding-left: 19px; }
.tree--scene .node--group { height: 18px; color: #5489a5; }
.tree--scene .toggle { margin-right: 3px; }
.tree--scene .node--off { padding-left: 21px; color: #c3c3c3; }
.eye { width: 12px; height: 8px; margin-right: 4px; fill: #b9b9b9; flex: none; }
.eye--on { margin-left: 2px; fill: #777; }
.grip { position: absolute; right: 1px; bottom: 1px; width: 8px; height: 8px; fill: none; stroke: #777; }
.console { position: absolute; left: 10px; bottom: 7px; width: 199px; height: 17px; border: 1px solid #c3d5dc; border-radius: 4px; background: #e1e1e1; }

.report {
  position: fixed;
  right: 30px;
  bottom: 0;
  display: flex;
  align-items: center;
  gap: 10px;
  height: 32px;
  padding: 0 10px;
  border: 0;
  border-top: 2px solid #0069ae;
  border-radius: 3px 3px 0 0;
  background: #00609c;
  color: #fff;
  font: 12px/18px Roboto, sans-serif;
}
.report-icon { width: 24px; height: 16px; }
```
